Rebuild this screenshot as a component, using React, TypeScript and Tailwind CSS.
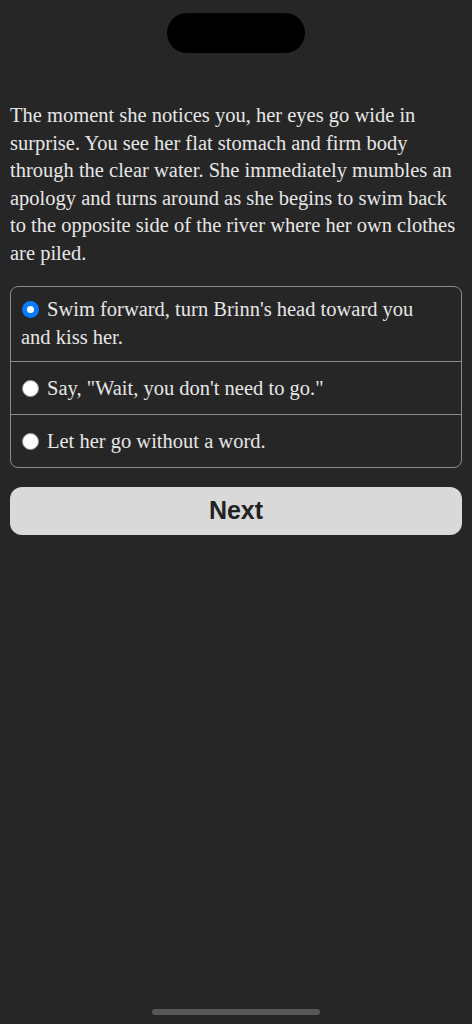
const options = [
  "Swim forward, turn Brinn's head toward you and kiss her.",
  'Say, "Wait, you don\'t need to go."',
  "Let her go without a word.",
];

function Radio({ checked }: { checked: boolean }) {
  return (
    <span
      className={
        checked
          ? "inline-block w-[17px] h-[17px] rounded-full bg-white border-[5.5px] border-[#0a7aff] align-[-1.5px] ml-[1px] mr-[8px]"
          : "inline-block w-[17px] h-[17px] rounded-full bg-white border border-[#9a9a9a] align-[-1.5px] ml-[1px] mr-[8px]"
      }
    />
  );
}

export default function App() {
  const selected = 0;

  return (
    <div
      className="relative min-h-[1024px] w-full bg-[#262626] flex flex-col"
      style={{ fontFamily: '"Liberation Serif", serif' }}
    >
      <div className="flex justify-center pt-[13px]">
        <div className="w-[138px] h-[40px] rounded-full bg-black" />
      </div>

      <div className="flex flex-col gap-[19px] px-[10px] pt-[49px]">
        <p className="text-[20.5px] leading-[27.5px] text-[#e6e6e6]">
          The moment she notices you, her eyes go wide in surprise. You see her flat stomach and firm body through the
          clear water. She immediately mumbles an apology and turns around as she begins to swim back to the opposite
          side of the river where her own clothes are piled.
        </p>

        <div className="border border-[#8a8a8a] rounded-[8px] overflow-hidden divide-y divide-[#8a8a8a]">
          {options.map((opt, i) => (
            <div
              key={i}
              className={
                (i > 0 ? "py-[12px] " : "pt-[8px] pb-[10px] ") +
                "pl-[10px] pr-[24px] text-[20.5px] leading-[28px] text-[#e6e6e6]"
              }
            >
              <Radio checked={i === selected} />
              {opt}
            </div>
          ))}
        </div>

        <button
          className="w-full h-[48px] rounded-[12px] bg-[#d9d9d9] text-[#222222] text-[25px] font-bold flex items-center justify-center"
          style={{ fontFamily: '"Liberation Sans", Arial, sans-serif' }}
        >
          Next
        </button>
      </div>

      <div className="flex-1" />
      <div className="flex justify-center pb-[9px]">
        <div className="w-[168px] h-[6px] rounded-full bg-[#575757]" />
      </div>
    </div>
  );
}
